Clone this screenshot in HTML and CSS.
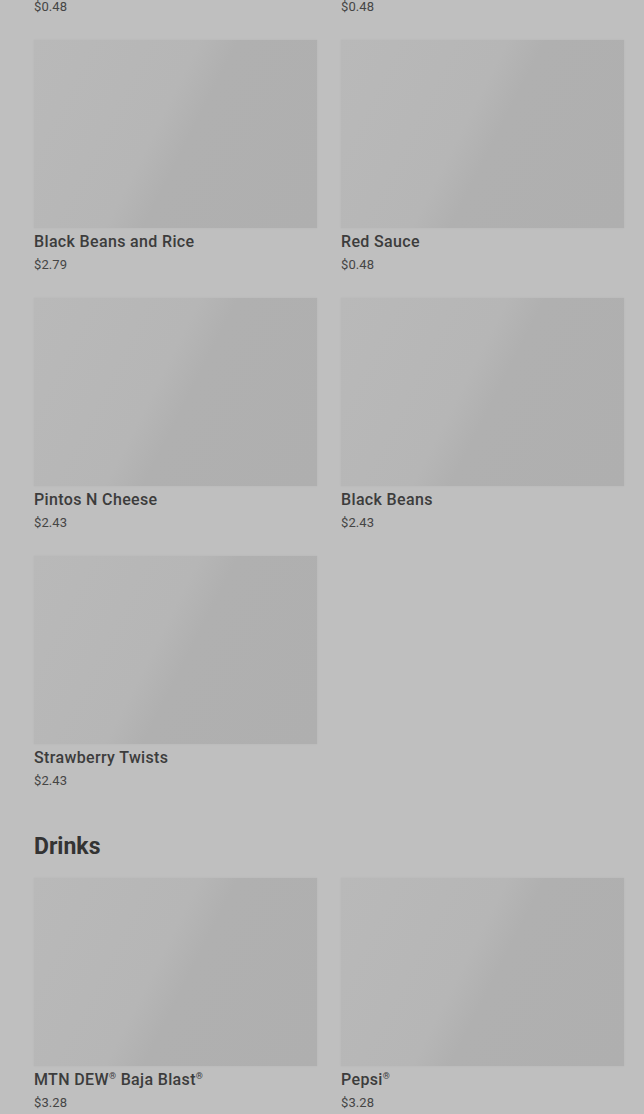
FILE: index.html
```html
<!DOCTYPE html>
<html>
<head>
<meta charset="utf-8">
<link rel="stylesheet" href="styles.css">
</head>
<body>
<main class="menu">
  <section class="section section-first">
    <div class="grid">
      <div class="card"><div class="thumb"></div><div class="name">Mild Sauce</div><div class="price">$0.48</div></div>
      <div class="card"><div class="thumb"></div><div class="name">Hot Sauce</div><div class="price">$0.48</div></div>
      <div class="card"><div class="thumb"></div><div class="name">Black Beans and Rice</div><div class="price">$2.79</div></div>
      <div class="card"><div class="thumb"></div><div class="name">Red Sauce</div><div class="price">$0.48</div></div>
      <div class="card"><div class="thumb"></div><div class="name">Pintos N Cheese</div><div class="price">$2.43</div></div>
      <div class="card"><div class="thumb"></div><div class="name">Black Beans</div><div class="price">$2.43</div></div>
      <div class="card"><div class="thumb"></div><div class="name">Strawberry Twists</div><div class="price">$2.43</div></div>
    </div>
  </section>
  <section class="section">
    <h2 class="heading">Drinks</h2>
    <div class="grid">
      <div class="card"><div class="thumb"></div><div class="name">MTN DEW<sup>®</sup> Baja Blast<sup>®</sup></div><div class="price">$3.28</div></div>
      <div class="card"><div class="thumb"></div><div class="name">Pepsi<sup>®</sup></div><div class="price">$3.28</div></div>
    </div>
  </section>
</main>
</body>
</html>
```
FILE: styles.css
```css
html, body {
  margin: 0;
  padding: 0;
  background: #bfbfbf;
  overflow: hidden;
}
body {
  font-family: Roboto, "Liberation Sans", sans-serif;
  color: #3a3a3a;
}
.menu {
  padding: 0 20px 0 34px;
}
.section-first {
  margin-top: -218px;
}
.grid {
  display: grid;
  grid-template-columns: 283px 283px;
  column-gap: 24px;
  row-gap: 24px;
}
.thumb {
  height: 188px;
  background: linear-gradient(117deg, #b9b9b9 0%, #b6b6b6 44%, #b0b0b0 54%, #afafaf 100%);
  box-shadow: 0 0 2px rgba(0, 0, 0, 0.06);
}
.name {
  margin-top: 4px;
  font-size: 16px;
  line-height: 20px;
  font-weight: 500;
  color: #3c3c3c;
  letter-spacing: 0.35px;
}
.name sup {
  font-size: 9px;
  line-height: 0;
  vertical-align: 6px;
}
.price {
  margin-top: 4px;
  font-size: 13px;
  line-height: 18px;
  color: #454545;
  letter-spacing: 0.1px;
}
.heading {
  margin: 41px 0 15px;
  font-size: 23px;
  line-height: 32px;
  font-weight: 700;
  color: #333333;
  letter-spacing: 0;
}
```
